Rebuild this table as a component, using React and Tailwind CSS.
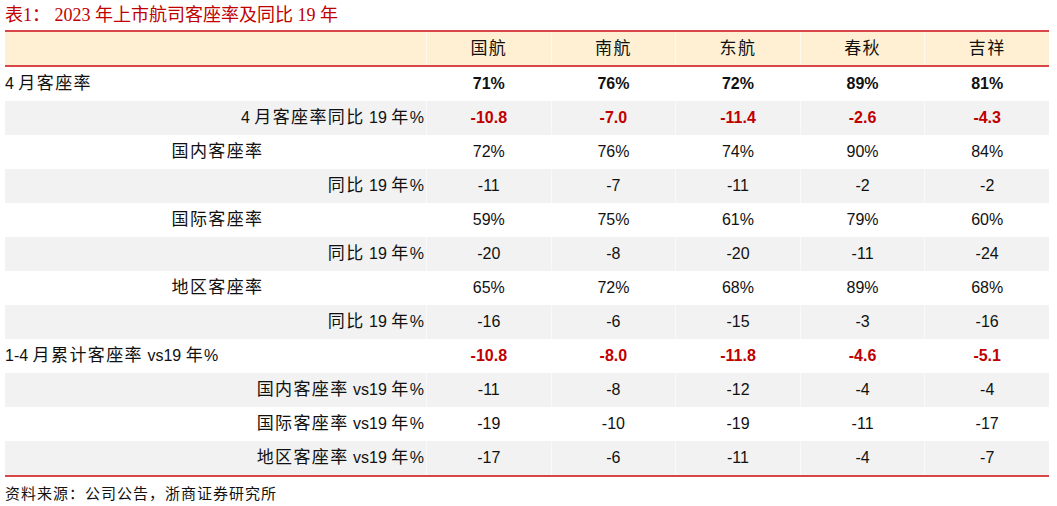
import React from "react";

const sans = { fontFamily: '"Liberation Sans", Arial, "Noto Sans CJK SC", sans-serif' };

function Txt({ s, cjk = "text-[17px] tracking-[1.4px]" }) {
  const parts = s.split(/([\u3000-\u9fff\uff00-\uffef]+)/).filter((p) => p !== "");
  return (
    <>
      {parts.map((p, i) =>
        /[\u3000-\u9fff\uff00-\uffef]/.test(p) ? (
          <span key={i} className={cjk}>
            {p}
          </span>
        ) : (
          <span key={i}>{p}</span>
        )
      )}
    </>
  );
}

const rows = [
  { label: "4 月客座率", align: "left", bold: true, red: false, v: ["71%", "76%", "72%", "89%", "81%"] },
  { label: "4 月客座率同比 19 年%", align: "right", bold: true, red: true, v: ["-10.8", "-7.0", "-11.4", "-2.6", "-4.3"] },
  { label: "国内客座率", align: "center", v: ["72%", "76%", "74%", "90%", "84%"] },
  { label: "同比 19 年%", align: "right", v: ["-11", "-7", "-11", "-2", "-2"] },
  { label: "国际客座率", align: "center", v: ["59%", "75%", "61%", "79%", "60%"] },
  { label: "同比 19 年%", align: "right", v: ["-20", "-8", "-20", "-11", "-24"] },
  { label: "地区客座率", align: "center", v: ["65%", "72%", "68%", "89%", "68%"] },
  { label: "同比 19 年%", align: "right", v: ["-16", "-6", "-15", "-3", "-16"] },
  { label: "1-4 月累计客座率 vs19 年%", align: "left", bold: true, red: true, v: ["-10.8", "-8.0", "-11.8", "-4.6", "-5.1"] },
  { label: "国内客座率 vs19 年%", align: "right", v: ["-11", "-8", "-12", "-4", "-4"] },
  { label: "国际客座率 vs19 年%", align: "right", v: ["-19", "-10", "-19", "-11", "-17"] },
  { label: "地区客座率 vs19 年%", align: "right", v: ["-17", "-6", "-11", "-4", "-7"] },
];

const heads = ["国航", "南航", "东航", "春秋", "吉祥"];

export default function App() {
  return (
    <div className="w-[1057px] h-[506px] bg-white relative overflow-hidden" style={sans}>
      <div
        className="h-[30px] pl-[5px] pt-[4px] text-[18px] leading-[22px] text-[#c00000] whitespace-pre"
        style={{ fontFamily: '"Liberation Serif", "Noto Sans CJK SC", serif' }}
      >
        {"表1： 2023 年上市航司客座率及同比 19 年"}
      </div>
      <div className="ml-[5px] w-[1044px]">
        <div className="flex h-[37px] bg-[#fff0d4] border-t-2 border-b-2 border-[#d9464a] text-[16px] text-[#111]">
          <div className="w-[422px] border-r border-[#fff8ec]" />
          {heads.map((h, i) => (
            <div key={i} className="flex-1 flex items-center justify-center border-r border-[#fff8ec] last:border-r-0">
              <Txt s={h} />
            </div>
          ))}
        </div>
        {rows.map((r, idx) => (
          <div
            key={idx}
            className={`flex h-[34px] text-[16px] ${idx % 2 === 1 ? "bg-[#f2f2f2]" : "bg-white"}`}
          >
            <div
              className={`w-[422px] flex items-center whitespace-pre text-[#111] border-r ${idx % 2 === 1 ? "border-[#fafafa]" : "border-white"} ${
                r.align === "left" ? "justify-start" : r.align === "center" ? "justify-center pl-[4px]" : "justify-end pr-[2px]"
              }`}
            >
              <Txt s={r.label} />
            </div>
            {r.v.map((v, i) => (
              <div
                key={i}
                className={`flex-1 flex items-center justify-center border-r last:border-r-0 ${idx % 2 === 1 ? "border-[#fafafa]" : "border-white"} ${
                  r.bold ? "font-bold" : ""
                } ${r.red ? "text-[#c00000]" : "text-[#111]"}`}
              >
                {v}
              </div>
            ))}
          </div>
        ))}
        <div className="h-[2px] bg-[#d9464a]" />
      </div>
      <div className="pl-[5px] pt-[8px] text-[15px] leading-[18px] tracking-[1px] text-[#111]">资料来源：公司公告，浙商证券研究所</div>
    </div>
  );
}
